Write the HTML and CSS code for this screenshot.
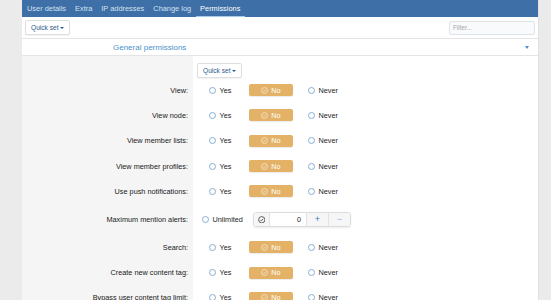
FILE: index.html
```html
<!DOCTYPE html>
<html>
<head>
<meta charset="utf-8">
<link rel="stylesheet" href="styles.css">
</head>
<body>
<div class="page">
  <nav class="tabs">
    <a class="tab">User details</a>
    <a class="tab">Extra</a>
    <a class="tab">IP addresses</a>
    <a class="tab">Change log</a>
    <a class="tab active">Permissions</a>
  </nav>
  <div class="toolbar">
    <button class="btn-quick">Quick set <span class="caret"></span></button>
    <input class="filter" type="text" placeholder="Filter...">
  </div>
  <div class="section-head">
    <span class="section-title">General permissions</span>
    <span class="section-caret"></span>
  </div>
  <div class="form">
    <div class="row row-quick">
      <div class="label"></div>
      <div class="value"><button class="btn-quick">Quick set <span class="caret"></span></button></div>
    </div>

    <div class="row"><div class="label">View:</div><div class="value">
      <span class="opt yes"><i class="radio"></i>Yes</span>
      <span class="no"><svg class="chk" viewBox="0 0 10 10"><circle cx="5" cy="5" r="4.2"/><path d="M3 5.1l1.4 1.4 2.6-2.8"/></svg>No</span>
      <span class="opt"><i class="radio"></i>Never</span>
    </div></div>

    <div class="row"><div class="label">View node:</div><div class="value">
      <span class="opt yes"><i class="radio"></i>Yes</span>
      <span class="no"><svg class="chk" viewBox="0 0 10 10"><circle cx="5" cy="5" r="4.2"/><path d="M3 5.1l1.4 1.4 2.6-2.8"/></svg>No</span>
      <span class="opt"><i class="radio"></i>Never</span>
    </div></div>

    <div class="row"><div class="label">View member lists:</div><div class="value">
      <span class="opt yes"><i class="radio"></i>Yes</span>
      <span class="no"><svg class="chk" viewBox="0 0 10 10"><circle cx="5" cy="5" r="4.2"/><path d="M3 5.1l1.4 1.4 2.6-2.8"/></svg>No</span>
      <span class="opt"><i class="radio"></i>Never</span>
    </div></div>

    <div class="row"><div class="label">View member profiles:</div><div class="value">
      <span class="opt yes"><i class="radio"></i>Yes</span>
      <span class="no"><svg class="chk" viewBox="0 0 10 10"><circle cx="5" cy="5" r="4.2"/><path d="M3 5.1l1.4 1.4 2.6-2.8"/></svg>No</span>
      <span class="opt"><i class="radio"></i>Never</span>
    </div></div>

    <div class="row"><div class="label">Use push notifications:</div><div class="value">
      <span class="opt yes"><i class="radio"></i>Yes</span>
      <span class="no"><svg class="chk" viewBox="0 0 10 10"><circle cx="5" cy="5" r="4.2"/><path d="M3 5.1l1.4 1.4 2.6-2.8"/></svg>No</span>
      <span class="opt"><i class="radio"></i>Never</span>
    </div></div>

    <div class="row row-spin"><div class="label">Maximum mention alerts:</div><div class="value value-spin">
      <span class="opt unl"><i class="radio"></i>Unlimited</span>
      <span class="spin">
        <span class="spin-chk"><svg class="chk dark" viewBox="0 0 10 10"><circle cx="5" cy="5" r="4.2"/><path d="M3 5.1l1.4 1.4 2.6-2.8"/></svg></span>
        <span class="spin-val">0</span>
        <span class="spin-btn plus">+</span>
        <span class="spin-btn minus">−</span>
      </span>
    </div></div>

    <div class="row"><div class="label">Search:</div><div class="value">
      <span class="opt yes"><i class="radio"></i>Yes</span>
      <span class="no"><svg class="chk" viewBox="0 0 10 10"><circle cx="5" cy="5" r="4.2"/><path d="M3 5.1l1.4 1.4 2.6-2.8"/></svg>No</span>
      <span class="opt"><i class="radio"></i>Never</span>
    </div></div>

    <div class="row"><div class="label">Create new content tag:</div><div class="value">
      <span class="opt yes"><i class="radio"></i>Yes</span>
      <span class="no"><svg class="chk" viewBox="0 0 10 10"><circle cx="5" cy="5" r="4.2"/><path d="M3 5.1l1.4 1.4 2.6-2.8"/></svg>No</span>
      <span class="opt"><i class="radio"></i>Never</span>
    </div></div>

    <div class="row"><div class="label">Bypass user content tag limit:</div><div class="value">
      <span class="opt yes"><i class="radio"></i>Yes</span>
      <span class="no"><svg class="chk" viewBox="0 0 10 10"><circle cx="5" cy="5" r="4.2"/><path d="M3 5.1l1.4 1.4 2.6-2.8"/></svg>No</span>
      <span class="opt"><i class="radio"></i>Never</span>
    </div></div>
  </div>
</div>
</body>
</html>
```

FILE: styles.css
```css
html, body {
  margin: 0;
  padding: 0;
  background: #ebebeb;
  font-family: "Liberation Sans", Arial, sans-serif;
  color: #1e1e1e;
  overflow: hidden;
}
.page {
  margin-left: 22px;
  width: 517px;
  background: #fff;
  min-height: 300px;
  border-right: 1px solid #e0e0e0;
  box-sizing: border-box;
}
.tabs {
  display: flex;
  height: 17px;
  background: #3e6fa6;
  padding-left: 0.5px;
}
.tab {
  font-size: 7.4px;
  line-height: 17px;
  padding: 0 4.5px;
  color: #d3e2f2;
  box-sizing: border-box;
}
.tab.active {
  color: #fff;
  border-bottom: 1.5px solid #a9cbeb;
}
.toolbar {
  display: flex;
  justify-content: space-between;
  align-items: center;
  height: 21px;
  padding: 0 3px;
  border-bottom: 1px solid #e4e4e4;
}
.btn-quick {
  height: 15px;
  padding: 0 5px;
  font-family: inherit;
  font-size: 6.6px;
  color: #2c5a8a;
  background: #fff;
  border: 1px solid #dedede;
  border-radius: 2px;
  box-shadow: 0 1px 1px rgba(0,0,0,0.05);
  display: inline-flex;
  align-items: center;
  gap: 2px;
}
.caret {
  display: inline-block;
  width: 0;
  height: 0;
  border-left: 2px solid transparent;
  border-right: 2px solid transparent;
  border-top: 2.5px solid #2c5a8a;
}
.filter {
  width: 86px;
  height: 14px;
  box-sizing: border-box;
  border: 1px solid #e0e4e8;
  border-radius: 2px;
  background: #f8fafc;
  font-family: inherit;
  font-size: 6.3px;
  padding: 0 3px;
}
.filter::placeholder { color: #a8a8a8; }
.section-head {
  height: 16px;
  display: flex;
  align-items: center;
  justify-content: space-between;
  border-bottom: 1px solid #e4e4e4;
  padding: 0 9px 0 91px;
}
.section-title {
  font-size: 8px;
  color: #4b92cd;
}
.section-caret {
  width: 0;
  height: 0;
  border-left: 2.5px solid transparent;
  border-right: 2.5px solid transparent;
  border-top: 3px solid #4b8ecb;
}
.row {
  display: grid;
  grid-template-columns: 171px 1fr;
  height: 25.3px;
}
.row-quick { height: 21.5px; }
.row-quick .value { align-items: flex-start; padding-top: 7px; padding-left: 4px; }
.row-spin { height: 30.7px; }
.label {
  background: #f5f5f5;
  font-size: 7.3px;
  text-align: right;
  padding-right: 5px;
  display: flex;
  align-items: center;
  justify-content: flex-end;
  color: #1a1a1a;
}
.value {
  display: flex;
  align-items: center;
  padding-left: 16px;
  font-size: 7.3px;
}
.value-spin { padding-left: 9px; }
.opt {
  display: inline-flex;
  align-items: center;
}
.opt.yes { width: 40px; }
.radio {
  display: inline-block;
  width: 7px;
  height: 7px;
  box-sizing: border-box;
  border: 1px solid #86aed6;
  border-radius: 50%;
  margin-right: 3.5px;
  background: #fff;
}
.no {
  width: 44px;
  height: 12px;
  margin-right: 15px;
  background: #e3b266;
  border-radius: 2px;
  color: #fff;
  display: inline-flex;
  align-items: center;
  justify-content: center;
  gap: 3px;
  box-shadow: 0 1px 1px rgba(0,0,0,0.08);
}
.chk {
  width: 7px;
  height: 7px;
  fill: none;
  stroke: #fbeede;
  stroke-width: 1;
}
.chk.dark { stroke: #333; width: 7.5px; height: 7.5px; }
.unl { width: 51px; }
.spin {
  display: inline-flex;
  height: 15px;
  width: 98px;
  box-sizing: border-box;
  border: 1px solid #dcdcdc;
  border-radius: 3px;
  box-shadow: 0 1px 2px rgba(0,0,0,0.08);
  overflow: hidden;
}
.spin-chk {
  width: 15px;
  display: flex;
  align-items: center;
  justify-content: center;
  background: #f6f6f6;
  border-right: 1px solid #e2e2e2;
}
.spin-val {
  width: 36px;
  box-sizing: border-box;
  text-align: right;
  padding-right: 5px;
  line-height: 13px;
  background: #fff;
}
.spin-btn {
  flex: 1;
  text-align: center;
  line-height: 13px;
  background: #f6f6f6;
  border-left: 1px solid #e2e2e2;
  font-size: 9px;
}
.plus { color: #3b7cc0; }
.minus { color: #8fb6dc; }
```
